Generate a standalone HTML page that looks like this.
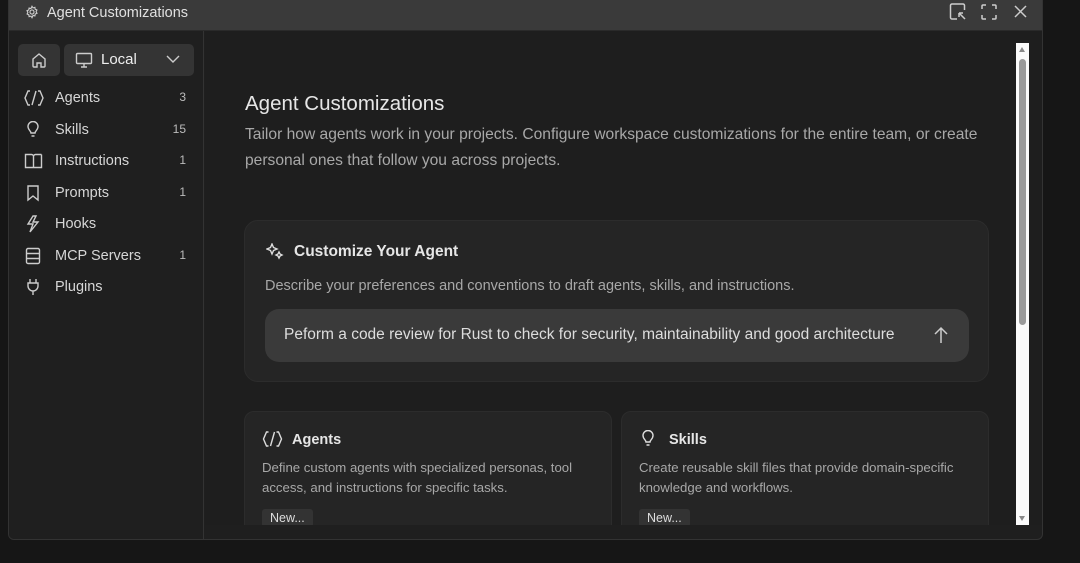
<!DOCTYPE html>
<html><head><meta charset="utf-8"><style>
*{box-sizing:border-box;margin:0;padding:0}
body{width:1080px;height:563px;background:#161616;font-family:"Liberation Sans",sans-serif;overflow:hidden;position:relative;color:#ccc}
.win{position:absolute;left:8px;top:0;width:1035px;height:540px;background:#1f1f1f;border:1px solid #333;border-top:none;border-radius:0 0 6px 6px;overflow:hidden}
.title{position:absolute;left:0;top:0;width:100%;height:31px;background:#3a3a3a;border-bottom:1px solid #2a2a2a}
.title .t{position:absolute;left:38px;top:5px;font-size:14.5px;color:#e0e0e0}
.side{position:absolute;left:0;top:31px;width:195px;height:509px;background:#1f1f1f;border-right:1px solid #333}
.main{position:absolute;left:196px;top:31px;right:0;height:494px;background:#1e1e1e;overflow:hidden}
.btn{position:absolute;background:#343434;border-radius:5px}
.item{position:absolute;left:15px;width:170px;height:24px;font-size:14.5px;color:#d6d6d6}
.item svg{position:absolute;left:0;top:2px}
.item .l{position:absolute;left:31px;top:3px}
.item .n{position:absolute;right:8px;top:3px;font-size:12px;color:#bbb}
.card{position:absolute;background:#252525;border:1px solid #2c2c2c;border-radius:10px}
.sb{position:absolute;left:1016px;top:43px;width:13px;height:482px;background:#fafafa}
</style></head><body>
<div class="win">
 <div class="title">
  <svg style="position:absolute;left:16px;top:5px" width="14" height="14" viewBox="0 0 16 16" fill="none" stroke="#ccc" stroke-width="1.3"><circle cx="8" cy="8" r="2.3"/><path d="M8 1.5l1.2 1.8 2.1-.6.3 2.1 2 .9-.9 1.9 1 1.9-2 .8-.4 2.2-2.1-.6L8 14.5l-1.2-1.8-2.1.6-.3-2.1-2-.9.9-1.9-1-1.9 2-.8.4-2.2 2.1.6z"/></svg>
  <div class="t">Agent Customizations</div>
  <svg style="position:absolute;left:939px;top:2px" width="20" height="20" viewBox="0 0 20 20" fill="none" stroke="#ccc" stroke-width="1.5"><path d="M9 17H4a1.5 1.5 0 0 1-1.5-1.5v-12A1.5 1.5 0 0 1 4 2h11a1.5 1.5 0 0 1 1.5 1.5V8"/><path d="M11 11l6 6M11 11v4M11 11h4"/></svg>
  <svg style="position:absolute;left:971px;top:3px" width="18" height="18" viewBox="0 0 18 18" fill="none" stroke="#ccc" stroke-width="1.5"><path d="M2 6V3a1 1 0 0 1 1-1h3M12 2h3a1 1 0 0 1 1 1v3M16 12v3a1 1 0 0 1-1 1h-3M6 16H3a1 1 0 0 1-1-1v-3"/></svg>
  <svg style="position:absolute;left:1004px;top:4px" width="15" height="15" viewBox="0 0 15 15" stroke="#ccc" stroke-width="1.5"><path d="M2 2l11 11M13 2L2 13"/></svg>
 </div>
 <div class="side">
  <div class="btn" style="left:9px;top:13px;width:42px;height:32px"><svg style="position:absolute;left:12px;top:7px" width="18" height="18" viewBox="0 0 18 18" fill="none" stroke="#ccc" stroke-width="1.4"><path d="M3 8l6-5 6 5v7a1 1 0 0 1-1 1h-3v-4H7v4H4a1 1 0 0 1-1-1z"/></svg></div>
  <div class="btn" style="left:55px;top:13px;width:130px;height:32px"><svg style="position:absolute;left:11px;top:7px" width="18" height="18" viewBox="0 0 18 18" fill="none" stroke="#ccc" stroke-width="1.4"><rect x="1.5" y="2.5" width="15" height="10" rx="1"/><path d="M6 16h6M9 12.5V16"/></svg><span style="position:absolute;left:37px;top:7px;font-size:15px;color:#eee">Local</span><svg style="position:absolute;left:102px;top:10px" width="14" height="10" viewBox="0 0 14 10" fill="none" stroke="#ccc" stroke-width="1.4"><path d="M1 2l6 6 6-6"/></svg></div>
  <div class="item" style="top:56px"><svg width="20" height="18" viewBox="0 0 20 18" fill="none" stroke="#ccc" stroke-width="1.4"><path d="M6 2H4L1 9l3 7h2M14 2h2l3 7-3 7h-2M12 2L8 16"/></svg><span class="l">Agents</span><span class="n">3</span></div>
  <div class="item" style="top:88px"><svg width="20" height="18" viewBox="0 0 20 18" fill="none" stroke="#ccc" stroke-width="1.4"><path d="M7 12c0-2-3-3-3-6.5a5 5 0 0 1 10 0C14 9 11 10 11 12zM7.5 15h3"/></svg><span class="l">Skills</span><span class="n">15</span></div>
  <div class="item" style="top:119px"><svg width="20" height="18" viewBox="0 0 20 18" fill="none" stroke="#ccc" stroke-width="1.4"><path d="M1.5 2.5h6a2 2 0 0 1 2 2v11h-8zM17.5 2.5h-6a2 2 0 0 0-2 2M17.5 2.5v13h-8"/></svg><span class="l">Instructions</span><span class="n">1</span></div>
  <div class="item" style="top:151px"><svg width="20" height="18" viewBox="0 0 20 18" fill="none" stroke="#ccc" stroke-width="1.4"><path d="M4 2h10v14l-5-4-5 4z"/></svg><span class="l">Prompts</span><span class="n">1</span></div>
  <div class="item" style="top:182px"><svg width="20" height="18" viewBox="0 0 20 18" fill="none" stroke="#ccc" stroke-width="1.4"><path d="M9 1L4 9h5l-3 8 8-10H9l3-6z"/></svg><span class="l">Hooks</span></div>
  <div class="item" style="top:214px"><svg width="20" height="18" viewBox="0 0 20 18" fill="none" stroke="#ccc" stroke-width="1.4"><rect x="2.5" y="1.5" width="13" height="15" rx="1.5"/><path d="M2.5 6.5h13M2.5 11.5h13"/></svg><span class="l">MCP Servers</span><span class="n">1</span></div>
  <div class="item" style="top:245px"><svg width="20" height="18" viewBox="0 0 20 18" fill="none" stroke="#ccc" stroke-width="1.4"><path d="M6 1v4M12 1v4M4 5h10v3a5 5 0 0 1-10 0zM9 13v4"/></svg><span class="l">Plugins</span></div>
 </div>
 <div class="main">
  <div style="position:absolute;left:40px;top:61px;font-size:20.5px;color:#e6e6e6">Agent Customizations</div>
  <div style="position:absolute;left:40px;top:91px;width:760px;font-size:15.6px;line-height:26px;color:#a8a8a8">Tailor how agents work in your projects. Configure workspace customizations for the entire team, or create personal ones that follow you across projects.</div>
  <div class="card" style="left:39px;top:189px;width:745px;height:162px;border-radius:14px">
   <svg style="position:absolute;left:21px;top:22px" width="18" height="18" viewBox="0 0 18 18" fill="none" stroke="#ddd" stroke-width="1.4"><path d="M6 1l1.5 3.5L11 6 7.5 7.5 6 11 4.5 7.5 1 6l3.5-1.5zM13 9l1 2 2 1-2 1-1 2-1-2-2-1 2-1z"/></svg>
   <div style="position:absolute;left:49px;top:22px;font-size:15.5px;font-weight:bold;color:#e6e6e6">Customize Your Agent</div>
   <div style="position:absolute;left:20px;top:57px;font-size:14.5px;color:#a8a8a8">Describe your preferences and conventions to draft agents, skills, and instructions.</div>
   <div style="position:absolute;left:20px;top:88px;width:704px;height:53px;background:#3a3a3a;border-radius:14px">
    <div style="position:absolute;left:19px;top:17px;font-size:15.5px;color:#ddd">Peform a code review for Rust to check for security, maintainability and good architecture</div>
    <svg style="position:absolute;left:668px;top:17px" width="16" height="18" viewBox="0 0 16 18" fill="none" stroke="#ccc" stroke-width="1.5"><path d="M8 17V2M2 8l6-6 6 6"/></svg>
   </div>
  </div>
  <div class="card" style="left:39px;top:380px;width:368px;height:130px">
   <svg style="position:absolute;left:17px;top:18px" width="21" height="18" viewBox="0 0 20 18" fill="none" stroke="#ddd" stroke-width="1.4"><path d="M6 2H4L1 9l3 7h2M14 2h2l3 7-3 7h-2M12 2L8 16"/></svg>
   <div style="position:absolute;left:47px;top:20px;font-size:14.5px;font-weight:bold;color:#e6e6e6">Agents</div>
   <div style="position:absolute;left:17px;top:46px;width:340px;font-size:13.2px;line-height:20px;color:#a8a8a8">Define custom agents with specialized personas, tool access, and instructions for specific tasks.</div>
   <div style="position:absolute;left:17px;top:97px;padding:2px 8px;background:#333;border-radius:3px;font-size:12.5px;color:#ddd">New...</div>
  </div>
  <div class="card" style="left:416px;top:380px;width:368px;height:130px">
   <svg style="position:absolute;left:17px;top:18px" width="20" height="18" viewBox="0 0 20 18" fill="none" stroke="#ddd" stroke-width="1.4"><path d="M7 12c0-2-3-3-3-6.5a5 5 0 0 1 10 0C14 9 11 10 11 12zM7.5 15h3"/></svg>
   <div style="position:absolute;left:47px;top:20px;font-size:14.5px;font-weight:bold;color:#e6e6e6">Skills</div>
   <div style="position:absolute;left:17px;top:46px;width:340px;font-size:13.2px;line-height:20px;color:#a8a8a8">Create reusable skill files that provide domain-specific knowledge and workflows.</div>
   <div style="position:absolute;left:17px;top:97px;padding:2px 8px;background:#333;border-radius:3px;font-size:12.5px;color:#ddd">New...</div>
  </div>
 </div>
</div>
<div class="sb">
 <div style="position:absolute;left:3px;top:4px;width:0;height:0;border-left:3.5px solid transparent;border-right:3.5px solid transparent;border-bottom:5px solid #888"></div>
 <div style="position:absolute;left:3px;top:16px;width:7px;height:266px;background:#9a9a9a;border-radius:4px"></div>
 <div style="position:absolute;left:3px;top:473px;width:0;height:0;border-left:3.5px solid transparent;border-right:3.5px solid transparent;border-top:5px solid #888"></div>
</div>
</body></html>
